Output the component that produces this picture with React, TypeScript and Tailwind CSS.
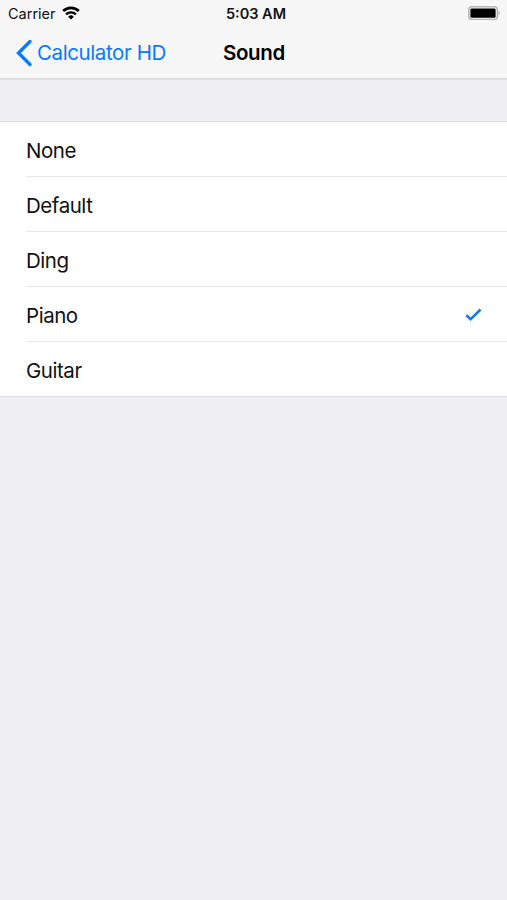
import React, { useState } from 'react';

const SOUNDS = ['None', 'Default', 'Ding', 'Piano', 'Guitar'];

const WifiIcon: React.FC = () => (
  <svg width="18" height="14" viewBox="0 0 18 14" className="relative -top-px ml-[6px]">
    <path d="M1.2 5a11.2 11.2 0 0 1 15.6 0" fill="none" stroke="#000" strokeWidth="2.7" />
    <path d="M4 8.4a7.2 7.2 0 0 1 10 0" fill="none" stroke="#000" strokeWidth="2.3" />
    <path d="M9 13.4 6.2 10.7a4 4 0 0 1 5.6 0z" fill="#000" />
  </svg>
);

const BatteryIcon: React.FC = () => (
  <svg width="33" height="14" viewBox="0 0 33 14" className="relative -top-px">
    <rect x="0.8" y="0.8" width="28.6" height="12.6" rx="3.2" fill="none" stroke="#b5b5b5" strokeWidth="1.5" />
    <rect x="2.4" y="2.4" width="25.2" height="9.4" rx="1.4" fill="#000" />
    <path d="M30.6 5c1.5.8 1.5 3.4 0 4.2z" fill="#999" />
  </svg>
);

const App: React.FC = () => {
  const [selected, setSelected] = useState('Piano');

  return (
    <div className="flex h-screen flex-col bg-[#efeff4] font-['Inter','Liberation_Sans',sans-serif] text-[#111]">
      <header className="h-[80px] shrink-0 border-b-2 border-[#e0e0e2] bg-[#f7f7f7]">
        <div className="grid h-[27px] grid-cols-3 items-center">
          <div className="flex items-center pl-[8px] text-[14.5px]">
            <span>Carrier</span>
            <WifiIcon />
          </div>
          <span className="pl-[5px] text-center text-[14.5px] font-semibold">5:03 AM</span>
          <div className="flex justify-end pr-[6px]">
            <BatteryIcon />
          </div>
        </div>
        <div className="grid h-[51px] grid-cols-3 items-center">
          <button className="flex items-center pl-[16px] text-[20.5px] tracking-[-0.4px] whitespace-nowrap text-[#087aff]">
            <svg width="17" height="28" viewBox="0 0 17 28" className="mr-[4px] shrink-0">
              <path d="M14 2.5 2.5 14 14 25.5" fill="none" stroke="currentColor" strokeWidth="3.4" strokeLinecap="round" />
            </svg>
            <span className="pt-[2px]">Calculator HD</span>
          </button>
          <h1 className="pt-[2px] pl-px text-center text-[20.5px] font-semibold tracking-[-0.3px] text-black">Sound</h1>
        </div>
      </header>

      <ul className="mt-[41px] border-y border-[#dedee2] bg-white pl-[26px]">
        {SOUNDS.map((sound) => (
          <li key={sound} className="h-[55px] border-b border-[#e6e6e8] last:h-[54px] last:border-b-0">
            <button
              onClick={() => setSelected(sound)}
              className="flex h-full w-full items-center justify-between pt-[4px] pr-[25px] text-[20.5px] tracking-[-0.46px]"
            >
              {sound}
              {selected === sound && (
                <svg width="17" height="14" viewBox="0 0 17 14" className="relative -top-px">
                  <path d="m1.4 7.3 4.2 4L15.5 1.5" fill="none" stroke="#087aff" strokeWidth="2.6" />
                </svg>
              )}
            </button>
          </li>
        ))}
      </ul>
    </div>
  );
};

export default App;
